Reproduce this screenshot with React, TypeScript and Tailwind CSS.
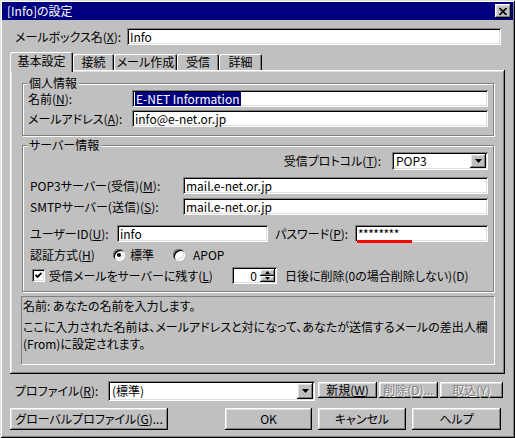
import React from 'react';

const raised =
  'shadow-[inset_-1px_-1px_0_#000,inset_1px_1px_0_#fff,inset_-2px_-2px_0_#808080,inset_2px_2px_0_#dfdfdf]';
const sunken =
  'shadow-[inset_1px_1px_0_#808080,inset_-1px_-1px_0_#fff,inset_2px_2px_0_#000,inset_-2px_-2px_0_#dfdfdf]';

function K({ c }: { c: string }) {
  return (
    <span>
      (<u className="underline-offset-[1px]">{c}</u>)
    </span>
  );
}

function Field({ className = '', children }: { className?: string; children?: React.ReactNode }) {
  return (
    <div className={`relative bg-white ${sunken} flex items-center pl-[3px] pr-[3px] overflow-hidden whitespace-nowrap ${className}`}>
      {children}
    </div>
  );
}

function DropArrow() {
  return (
    <svg width="7" height="4" viewBox="0 0 7 4">
      <polygon points="0,0 7,0 3.5,4" fill="#000" />
    </svg>
  );
}

function Combo({ className = '', value }: { className?: string; value: string }) {
  return (
    <div className={`bg-white ${sunken} flex items-center p-[2px] ${className}`}>
      <span className="flex-1 pl-[2px] whitespace-nowrap">{value}</span>
      <span className={`w-[16px] h-full bg-[#c0c0c0] ${raised} flex items-center justify-center`}>
        <DropArrow />
      </span>
    </div>
  );
}

function Button({
  className = '',
  disabled = false,
  children,
}: {
  className?: string;
  disabled?: boolean;
  children: React.ReactNode;
}) {
  return (
    <div
      className={`bg-[#c0c0c0] ${raised} flex items-center justify-center whitespace-nowrap ${
        disabled ? 'text-[#808080] [text-shadow:1px_1px_0_#fff]' : 'text-black'
      } ${className}`}
    >
      {children}
    </div>
  );
}

function Group({ title, className = '', children }: { title: string; className?: string; children: React.ReactNode }) {
  return (
    <div className={`relative border border-[#808080] shadow-[1px_1px_0_#fff,inset_1px_1px_0_#fff] ${className}`}>
      <span className="absolute left-[4px] -top-[8px] bg-[#c0c0c0] px-[2px] leading-[14px]">{title}</span>
      {children}
    </div>
  );
}

function Radio({ checked = false }: { checked?: boolean }) {
  return (
    <span className={`w-[12px] h-[12px] rounded-full bg-white ${sunken} flex items-center justify-center`}>
      {checked && <span className="w-[4px] h-[4px] rounded-full bg-black" />}
    </span>
  );
}

function Check() {
  return (
    <span className={`w-[13px] h-[13px] bg-white ${sunken} flex items-center justify-center`}>
      <svg width="7" height="7" viewBox="0 0 7 7">
        <path d="M0.5 3 L2.5 5 L6.5 1" stroke="#000" strokeWidth="1.8" fill="none" />
      </svg>
    </span>
  );
}

function Spin() {
  return (
    <div className={`w-[45px] h-[17px] bg-white ${sunken} flex p-[2px]`}>
      <span className="flex-1 text-right pr-[3px] leading-[13px]">0</span>
      <span className="w-[15px] flex flex-col">
        <span className={`flex-1 bg-[#c0c0c0] ${raised} flex items-center justify-center`}>
          <svg width="5" height="3" viewBox="0 0 5 3">
            <polygon points="2.5,0 5,3 0,3" fill="#000" />
          </svg>
        </span>
        <span className={`flex-1 bg-[#c0c0c0] ${raised} flex items-center justify-center`}>
          <svg width="5" height="3" viewBox="0 0 5 3">
            <polygon points="0,0 5,0 2.5,3" fill="#000" />
          </svg>
        </span>
      </span>
    </div>
  );
}

const tabs = ['接続', 'メール作成', '受信', '詳細'];
const tabWidths = ['w-[41px]', 'w-[63px]', 'w-[42px]', 'w-[43px]'];

export default function App() {
  return (
    <div className="w-[515px] h-[438px] bg-[#c0c0c0] flex flex-col text-[12px] leading-[14px] text-black [font-family:'Noto_Sans_CJK_JP','Noto_Sans',sans-serif] [font-feature-settings:'palt'] shadow-[inset_1px_1px_0_#dfdfdf,inset_-1px_-1px_0_#000,inset_2px_2px_0_#fff,inset_-2px_-2px_0_#808080]">
      {/* title bar */}
      <div className="mt-[2px] mx-[2px] h-[18px] bg-[#000080] flex items-center pl-[5px] text-white">
        <span>[Info]の設定</span>
        <span className={`ml-auto mr-[2px] w-[16px] h-[14px] bg-[#c0c0c0] ${raised} flex items-center justify-center`}>
          <svg width="8" height="7" viewBox="0 0 8 7">
            <path d="M0.5 0 L7.5 7 M7.5 0 L0.5 7" stroke="#000" strokeWidth="1.6" />
          </svg>
        </span>
      </div>

      {/* mailbox name */}
      <div className="mt-[8px] h-[17px] flex items-center">
        <span className="ml-[15px] w-[112px] whitespace-nowrap">
          メールボックス名<K c="X" />:
        </span>
        <Field className="w-[374px] h-[17px]">Info</Field>
      </div>

      {/* tabs */}
      <div className="mt-[7px] h-[18px] ml-[10px] flex items-end relative z-10">
        <div className="h-[20px] -mb-[2px] w-[63px] bg-[#c0c0c0] rounded-t-[2px] shadow-[inset_1px_1px_0_#fff,inset_-1px_0_0_#000,inset_-2px_0_0_#808080] flex justify-center pt-[2px]">
          基本設定
        </div>
        {tabs.map((t, i) => (
          <div
            key={t}
            className={`h-[16px] ${tabWidths[i]} rounded-t-[2px] shadow-[inset_1px_1px_0_#fff,inset_-1px_0_0_#000,inset_-2px_0_0_#808080] flex justify-center pt-[1px] whitespace-nowrap`}
          >
            {t}
          </div>
        ))}
      </div>

      {/* tab panel */}
      <div className={`relative ml-[10px] w-[495px] h-[304px] ${raised} flex flex-col`}>
        <Group title="個人情報" className="mt-[13px] ml-[12px] w-[472px] h-[53px]">
          <div className="pt-[6px] pl-[5px] flex flex-col gap-[3px]">
            <div className="h-[17px] flex items-center">
              <span className="w-[104px] whitespace-nowrap">
                名前<K c="N" />:
              </span>
              <Field className="w-[356px] h-[17px]">
                <span className="bg-[#000080] text-white px-[1px]">E-NET Information</span>
              </Field>
            </div>
            <div className="h-[17px] flex items-center">
              <span className="w-[104px] whitespace-nowrap">
                メールアドレス<K c="A" />:
              </span>
              <Field className="w-[356px] h-[17px]">info@e-net.or.jp</Field>
            </div>
          </div>
        </Group>

        <Group title="サーバー情報" className="mt-[9px] ml-[12px] w-[472px] h-[147px]">
          <div className="pt-[6px] pl-[7px] flex flex-col">
            <div className="h-[18px] flex items-center justify-end pr-[5px]">
              <span className="mr-[11px] whitespace-nowrap">
                受信プロトコル<K c="T" />:
              </span>
              <Combo className="w-[96px] h-[18px]" value="POP3" />
            </div>
            <div className="mt-[7px] h-[17px] flex items-center">
              <span className="w-[153px] whitespace-nowrap">
                POP3サーバー(受信)<K c="M" />:
              </span>
              <Field className="w-[305px] h-[17px]">mail.e-net.or.jp</Field>
            </div>
            <div className="mt-[4px] h-[17px] flex items-center">
              <span className="w-[153px] whitespace-nowrap">
                SMTPサーバー(送信)<K c="S" />:
              </span>
              <Field className="w-[305px] h-[17px]">mail.e-net.or.jp</Field>
            </div>
            <div className="mt-[10px] h-[17px] flex items-center">
              <span className="w-[87px] whitespace-nowrap">
                ユーザーID<K c="U" />:
              </span>
              <Field className="w-[151px] h-[17px]">info</Field>
              <span className="ml-[7px] w-[80px] whitespace-nowrap">
                パスワード<K c="P" />:
              </span>
              <Field className="w-[133px] h-[17px] overflow-visible">
                <span className="tracking-[-0.5px]">********</span>
                <span className="absolute left-[2px] top-[15px] w-[55px] h-[3px] bg-[#ff0000]" />
              </Field>
            </div>
            <div className="mt-[6px] h-[14px] flex items-center">
              <span className="w-[83px] whitespace-nowrap">
                認証方式<K c="H" />
              </span>
              <span className="w-[60px] flex items-center gap-[5px]">
                <Radio checked />
                標準
              </span>
              <span className="flex items-center gap-[8px]">
                <Radio />
                APOP
              </span>
            </div>
            <div className="mt-[5px] h-[17px] flex items-center">
              <span className="ml-[2px]">
                <Check />
              </span>
              <span className="ml-[4px] w-[183px] whitespace-nowrap">
                受信メールをサーバーに残す<K c="L" />
              </span>
              <Spin />
              <span className="ml-[8px] whitespace-nowrap">日後に削除(0の場合削除しない)(D)</span>
            </div>
          </div>
        </Group>

        <div className="mt-[4px] ml-[11px] w-[474px] h-[69px] border border-t-[#808080] border-l-[#808080] border-r-white border-b-white pl-[1px] leading-[17px] whitespace-nowrap">
          <div>名前: あなたの名前を入力します。</div>
          <div className="mt-[4px]">ここに入力された名前は、メールアドレスと対になって、あなたが送信するメールの差出人欄</div>
          <div>(From)に設定されます。</div>
        </div>
      </div>

      {/* profile row */}
      <div className="mt-[7px] h-[20px] flex items-start">
        <span className="ml-[15px] w-[93px] h-[20px] flex items-center whitespace-nowrap">
          プロファイル<K c="R" />:
        </span>
        <Combo className="w-[207px] h-[20px]" value="(標準)" />
        <Button className="ml-[3px] mt-[1px] w-[59px] h-[16px]">
          新規<K c="W" />
        </Button>
        <Button disabled className="ml-[2px] mt-[1px] w-[59px] h-[16px]">
          削除(D)...
        </Button>
        <Button disabled className="ml-[2px] mt-[1px] w-[63px] h-[16px]">
          取込(Y)
        </Button>
      </div>

      {/* bottom buttons */}
      <div className="mt-[7px] h-[22px] flex">
        <Button className="ml-[10px] w-[158px] h-[22px]">
          グローバルプロファイル<K c="G" />...
        </Button>
        <Button className="ml-[57px] w-[87px] h-[22px]">OK</Button>
        <Button className="ml-[6px] w-[88px] h-[22px]">キャンセル</Button>
        <Button className="ml-[6px] w-[89px] h-[22px]">ヘルプ</Button>
      </div>
    </div>
  );
}
